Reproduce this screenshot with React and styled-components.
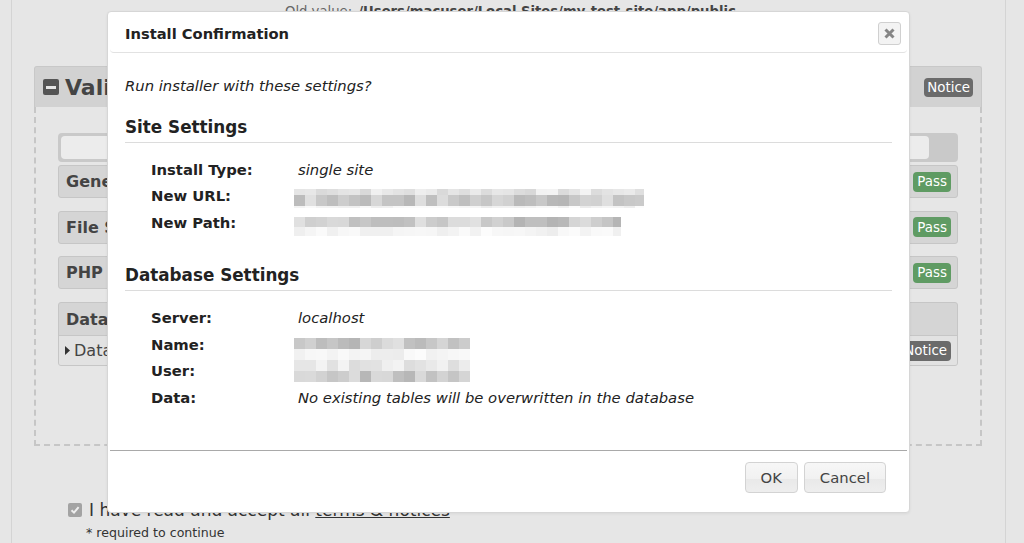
import React from 'react';
import styled, { createGlobalStyle } from 'styled-components';

const Global = createGlobalStyle`
  html, body { margin: 0; padding: 0; }
  body {
    background: #e6e6e6;
    font-family: "DejaVu Sans", Verdana, sans-serif;
    color: #333;
  }
`;

const Page = styled.div`
  position: relative;
  width: 1024px;
  height: 543px;
  overflow: hidden;
`;

const Frame = styled.div`
  box-sizing: border-box;
  margin-left: 11px;
  width: 995px;
  height: 100%;
  border-left: 1px solid #d4d4d4;
  border-right: 1px solid #d4d4d4;
  padding: 0 23px 0 22px;
`;

const OldValue = styled.div`
  margin-left: 251px;
  padding-top: 3px;
  font-size: 13.2px;
  line-height: 18px;
  height: 18px;
  color: #666;
  white-space: nowrap;
  b { color: #444; margin-left: 2px; }
`;

const Panel = styled.section`
  margin-top: 45px;
`;

const PanelHeader = styled.div`
  box-sizing: border-box;
  height: 41px;
  display: flex;
  align-items: center;
  justify-content: space-between;
  padding: 0 8px 0 8px;
  background: #d2d2d2;
  border: 1px solid #c8c8c8;
  border-bottom: none;
  border-radius: 3px 3px 0 0;
`;

const PanelTitle = styled.h2`
  margin: 0;
  display: flex;
  align-items: center;
  gap: 6px;
  font-size: 22px;
  font-weight: bold;
  color: #444;
`;

const MinusBox = styled.span`
  width: 16px;
  height: 16px;
  border-radius: 2px;
  background: #555;
  display: flex;
  align-items: center;
  justify-content: center;
  &::after {
    content: "";
    width: 10px;
    height: 3px;
    background: #e6e6e6;
  }
`;

const Badge = styled.span`
  display: inline-flex;
  align-items: center;
  justify-content: center;
  height: ${p => (p.$small ? 19 : 20)}px;
  padding: 0 ${p => (p.$small ? 3 : 4)}px;
  border-radius: 4px;
  font-size: 13.4px;
  font-weight: normal;
  color: #fff;
  background: ${p => (p.$tone === 'pass' ? '#5f9b63' : '#6b6b6b')};
`;

const PanelBody = styled.div`
  border: 2px dashed #c6c6c6;
  border-top: none;
  padding: 26px 22px 78px 22px;
  display: flex;
  flex-direction: column;
  gap: 12.7px;
`;

const FilterBar = styled.div`
  box-sizing: border-box;
  height: 29px;
  margin-bottom: -9.7px;
  border-radius: 4px;
  background: #c9c9c9;
  padding: 3px 29px 3px 3px;
  display: flex;
`;

const FilterInput = styled.div`
  flex: 1;
  border-radius: 4px;
  background: #ececec;
`;

const CheckRow = styled.div`
  box-sizing: border-box;
  border: 1px solid #c6c6c6;
  border-radius: 3px;
  background: #d5d5d5;
  overflow: hidden;
`;

const CheckHead = styled.div`
  box-sizing: border-box;
  height: ${p => (p.$tall ? 32 : 31)}px;
  display: flex;
  align-items: center;
  justify-content: space-between;
  padding: 0 6px 0 7px;
  font-size: 16px;
  font-weight: bold;
  color: #444;
`;

const CheckSub = styled.div`
  box-sizing: border-box;
  height: 30px;
  display: flex;
  align-items: center;
  justify-content: space-between;
  padding: 0 6px 0 6px;
  border-top: 1px solid #c6c6c6;
  background: #e2e2e2;
  font-size: 16px;
  color: #444;
`;

const SubLabel = styled.span`
  display: flex;
  align-items: center;
  gap: 4px;
`;

const Accept = styled.div`
  margin: 53px 0 0 34px;
  display: flex;
  align-items: center;
  gap: 7px;
  font-size: 17px;
  line-height: 22px;
  color: #333;
  a { color: #333; text-decoration: underline; }
`;

const CheckBox = styled.span`
  width: 14px;
  height: 14px;
  border-radius: 2px;
  background: #a3a3a3;
  display: flex;
  align-items: center;
  justify-content: center;
`;

const Required = styled.div`
  margin: 3px 0 0 52px;
  font-size: 12.6px;
  line-height: 18px;
  color: #333;
`;

/* ---------- Dialog ---------- */

const Dialog = styled.div`
  position: absolute;
  left: 107px;
  top: 11px;
  box-sizing: border-box;
  width: 803px;
  height: 502px;
  background: #fff;
  border: 1px solid #d6d6d6;
  border-radius: 4px;
  box-shadow: 0 1px 3px rgba(0, 0, 0, 0.06);
  display: flex;
  flex-direction: column;
`;

const TitleBar = styled.div`
  box-sizing: border-box;
  height: 41px;
  margin: 0 2px;
  padding: 3px 6px 0 15px;
  display: flex;
  align-items: center;
  justify-content: space-between;
  border-bottom: 1px solid #e2e2e2;
  border-radius: 0 0 4px 4px;
`;

const Title = styled.span`
  font-size: 14.7px;
  font-weight: bold;
  color: #222;
`;

const CloseButton = styled.button`
  box-sizing: border-box;
  width: 23px;
  height: 23px;
  padding: 0;
  border: 1px solid #d0d0d0;
  border-radius: 3px;
  background: #f3f3f3;
  display: flex;
  align-items: center;
  justify-content: center;
`;

const Content = styled.div`
  flex: 1;
  padding: 23px 17px 0 17px;
`;

const Lead = styled.p`
  margin: 0;
  font-size: 14.8px;
  line-height: 20px;
  font-style: italic;
  color: #222;
`;

const SectionTitle = styled.h3`
  margin: ${p => (p.$first ? '18.5px' : '27px')} 0 0 0;
  padding-bottom: 3px;
  font-size: 16.8px;
  line-height: 24px;
  font-weight: bold;
  color: #222;
  border-bottom: 1px solid #dcdcdc;
`;

const Details = styled.dl`
  margin: 13.5px 0 0 26px;
  display: grid;
  grid-template-columns: 147px 1fr;
  grid-auto-rows: 26.6px;
  align-items: center;
  font-size: 14.8px;
  color: #222;
`;

const Label = styled.dt`
  font-weight: bold;
`;

const Value = styled.dd`
  margin: 0;
  font-style: italic;
`;

const Redacted = styled.dd`
  margin: ${p => p.$offset}px 0 0 -4px;
  align-self: start;
  grid-row: span ${p => p.$span || 1};
  line-height: 0;
`;

const Footer = styled.div`
  box-sizing: border-box;
  height: 62px;
  margin: 0 2px;
  border-top: 1px solid #a9a9a9;
  padding: 11px 21px 0 0;
  display: flex;
  justify-content: flex-end;
  align-items: flex-start;
  gap: 6px;
`;

const Button = styled.button`
  box-sizing: border-box;
  height: 31px;
  padding: 0 ${p => p.$pad}px;
  font-family: "DejaVu Sans", Verdana, sans-serif;
  font-size: 14.8px;
  color: #444;
  border: 1px solid #d3d3d3;
  border-radius: 4px;
  background: linear-gradient(#f7f7f7 0%, #f1f1f1 55%, #e9e9e9 56%, #eeeeee 100%);
`;

/* pixelated redaction drawing */
function PixelBlur({ width, rows, seed }) {
  let s = seed;
  const rnd = () => {
    s = (s * 9301 + 49297) % 233280;
    return s / 233280;
  };
  const cell = 11;
  const cols = Math.ceil(width / cell);
  const ranges = { dark: [170, 215], mid: [180, 225], light: [215, 244], faint: [236, 252] };
  let y = 0;
  const rects = [];
  rows.forEach(([h, tone], ri) => {
    const [lo, hi] = ranges[tone];
    for (let c = 0; c < cols; c++) {
      const v = Math.round(lo + rnd() * (hi - lo));
      rects.push(
        <rect key={`${ri}-${c}`} x={c * cell} y={y} width={cell} height={h} fill={`rgb(${v},${v},${v})`} />
      );
    }
    y += h;
  });
  return (
    <svg width={width} height={y} viewBox={`0 0 ${width} ${y}`} style={{ display: 'block' }}>
      {rects}
    </svg>
  );
}

const CloseIcon = () => (
  <svg width="11" height="11" viewBox="0 0 11 11">
    <path d="M1.5 1.5 L9.5 9.5 M9.5 1.5 L1.5 9.5" stroke="#858585" strokeWidth="3" />
  </svg>
);

const CheckIcon = () => (
  <svg width="10" height="10" viewBox="0 0 10 10">
    <path d="M1.5 5.2 L4 7.6 L8.6 2.2" stroke="#eee" strokeWidth="2" fill="none" />
  </svg>
);

const Caret = () => (
  <svg width="5" height="9" viewBox="0 0 5 9">
    <polygon points="0,0 5,4.5 0,9" fill="#333" />
  </svg>
);

export default function App() {
  return (
    <>
      <Global />
      <Page>
        <Frame>
          <OldValue>
            Old value: <b>/Users/macuser/Local Sites/my-test-site/app/public</b>
          </OldValue>
          <Panel>
            <PanelHeader>
              <PanelTitle>
                <MinusBox />
                Validation
              </PanelTitle>
              <Badge $tone="notice" $small>Notice</Badge>
            </PanelHeader>
            <PanelBody>
              <FilterBar>
                <FilterInput />
              </FilterBar>
              <CheckRow>
                <CheckHead>
                  <span>General</span>
                  <Badge $tone="pass">Pass</Badge>
                </CheckHead>
              </CheckRow>
              <CheckRow>
                <CheckHead>
                  <span>File Settings</span>
                  <Badge $tone="pass">Pass</Badge>
                </CheckHead>
              </CheckRow>
              <CheckRow>
                <CheckHead>
                  <span>PHP Settings</span>
                  <Badge $tone="pass">Pass</Badge>
                </CheckHead>
              </CheckRow>
              <CheckRow>
                <CheckHead $tall>
                  <span>Database</span>
                </CheckHead>
                <CheckSub>
                  <SubLabel>
                    <Caret />
                    Database Tables
                  </SubLabel>
                  <Badge $tone="notice">Notice</Badge>
                </CheckSub>
              </CheckRow>
            </PanelBody>
          </Panel>
          <Accept>
            <CheckBox>
              <CheckIcon />
            </CheckBox>
            <span>
              I have read and accept all <a>terms &amp; notices</a>
            </span>
          </Accept>
          <Required>* required to continue</Required>
        </Frame>

        <Dialog>
          <TitleBar>
            <Title>Install Confirmation</Title>
            <CloseButton aria-label="close">
              <CloseIcon />
            </CloseButton>
          </TitleBar>
          <Content>
            <Lead>Run installer with these settings?</Lead>
            <SectionTitle $first>Site Settings</SectionTitle>
            <Details>
              <Label>Install Type:</Label>
              <Value>single site</Value>
              <Label>New URL:</Label>
              <Redacted $offset={6}>
                <PixelBlur width={350} seed={7} rows={[[6, 'light'], [11, 'mid'], [2, 'faint']]} />
              </Redacted>
              <Label>New Path:</Label>
              <Redacted $offset={8}>
                <PixelBlur width={327} seed={19} rows={[[10, 'mid'], [9, 'faint']]} />
              </Redacted>
            </Details>
            <SectionTitle>Database Settings</SectionTitle>
            <Details>
              <Label>Server:</Label>
              <Value>localhost</Value>
              <Label>Name:</Label>
              <Redacted $offset={7} $span={2}>
                <PixelBlur width={176} seed={31} rows={[[11, 'mid'], [11, 'faint'], [11, 'light'], [11, 'mid']]} />
              </Redacted>
              <Label>User:</Label>
              <Label>Data:</Label>
              <Value>No existing tables will be overwritten in the database</Value>
            </Details>
          </Content>
          <Footer>
            <Button $pad={15}>OK</Button>
            <Button $pad={15}>Cancel</Button>
          </Footer>
        </Dialog>
      </Page>
    </>
  );
}
